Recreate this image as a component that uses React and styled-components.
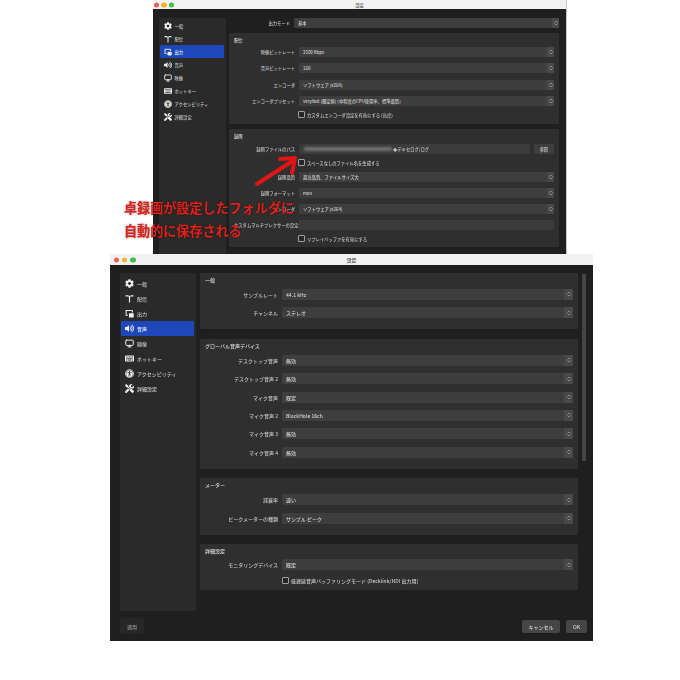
import React from "react";
import styled, { createGlobalStyle } from "styled-components";
import { ChevronsUpDown, Monitor } from "lucide-react";
import { FaCog, FaVolumeUp, FaKeyboard, FaUniversalAccess, FaTools } from "react-icons/fa";

const AntennaIcon = () => (
  <svg width="100%" height="100%" viewBox="0 0 16 16" fill="currentColor">
    <path d="M1 2h5.5v2.5H1zM9.500 2H15v2.500H9.500z" />
    <path d="M6.500 3.500h3V6H9v9H7V6h-.5z" />
  </svg>
);

const OutputIcon = () => (
  <svg width="100%" height="100%" viewBox="0 0 16 16" fill="none" stroke="currentColor" strokeWidth="1.800">
    <path d="M5 11H2V2.500h11V6" />
    <path d="M7 12.500h6" />
    <path d="M8 8.500h6.500v5.500H8z" fill="currentColor" />
  </svg>
);

const NAV = [
  { label: "一般", icon: <FaCog /> },
  { label: "配信", icon: <AntennaIcon /> },
  { label: "出力", icon: <OutputIcon /> },
  { label: "音声", icon: <FaVolumeUp /> },
  { label: "映像", icon: <Monitor strokeWidth={2.6} /> },
  { label: "ホットキー", icon: <FaKeyboard /> },
  { label: "アクセシビリティ", icon: <FaUniversalAccess /> },
  { label: "詳細設定", icon: <FaTools /> },
];

const GlobalStyle = createGlobalStyle`
  html, body {
    margin: 0;
    padding: 0;
    background: #fff;
  }
  body {
    font-family: "Noto Sans CJK JP", "Liberation Sans", sans-serif;
  }
`;

const Stage = styled.div`
  position: relative;
  width: 680px;
  height: 680px;
  overflow: hidden;
  display: flex;
  flex-direction: column;
  align-items: flex-start;
`;

const Window = styled.div`
  --font: ${(p) => (p.$compact ? "4.3px" : "5px")};
  --row-h: ${(p) => (p.$compact ? "10px" : "11px")};
  --row-gap: ${(p) => (p.$compact ? "6.2px" : "7.4px")};
  --label-w: ${(p) => (p.$compact ? "61px" : "73px")};
  --item-h: ${(p) => (p.$compact ? "13px" : "15px")};
  --icon: ${(p) => (p.$compact ? "8px" : "9px")};
  --nav-pad: 4px;
  --nav-gap: ${(p) => (p.$compact ? "2.500px" : "3px")};
  --spin: ${(p) => (p.$compact ? "7px" : "9px")};
  margin-left: ${(p) => p.$left}px;
  width: ${(p) => p.$width}px;
  height: ${(p) => p.$height}px;
  display: flex;
  flex-direction: column;
  flex: none;
  overflow: hidden;
  background: #1f1f1f;
  color: #d2d2d2;
  font-size: var(--font);
  font-weight: 500;
  box-shadow: ${(p) => (p.$compact ? "1px 0 0 #c8c8c8" : "none")};
  filter: blur(0.4px);
`;

const TitleBar = styled.div`
  position: relative;
  flex: none;
  height: ${(p) => p.$height}px;
  display: flex;
  align-items: center;
  justify-content: center;
  background: #f1f1f1;
  color: #444;
`;

const Lights = styled.div`
  position: absolute;
  left: ${(p) => (p.$compact ? "0.500px" : "3.700px")};
  top: 50%;
  transform: translateY(-50%);
  display: flex;
  gap: ${(p) => (p.$compact ? "2.700px" : "3.200px")};
`;

const Light = styled.span`
  width: 5.200px;
  height: 5.200px;
  border-radius: 50%;
  background: ${(p) => p.$color};
`;

const Body = styled.div`
  flex: 1;
  min-height: 0;
  display: flex;
  flex-direction: column;
`;

const Columns = styled.div`
  flex: 1;
  min-height: 0;
  display: flex;
  align-items: stretch;
  padding: ${(p) => p.$top}px 7px 0 ${(p) => p.$left}px;
  gap: ${(p) => p.$gap}px;
`;

const Sidebar = styled.div`
  flex: none;
  width: ${(p) => p.$width}px;
  padding: ${(p) => p.$top}px 2px 0 1px;
  background: #2a2a2a;
  box-sizing: border-box;
`;

const NavItem = styled.div`
  height: var(--item-h);
  display: flex;
  align-items: center;
  gap: var(--nav-gap);
  padding-left: var(--nav-pad);
  border-radius: 1px;
  background: ${(p) => (p.$active ? "#1e48b9" : "transparent")};
  color: ${(p) => (p.$active ? "#e6ecfa" : "#c6c6c6")};
`;

const NavIcon = styled.span`
  flex: none;
  width: var(--icon);
  height: var(--icon);
  display: flex;
  align-items: center;
  justify-content: center;
  color: #f0f0f0;

  svg {
    width: var(--icon);
    height: var(--icon);
  }
`;

const Main = styled.div`
  flex: 1;
  min-width: 0;
  display: flex;
  flex-direction: column;
  gap: ${(p) => p.$gap}px;
`;

const Section = styled.div`
  flex: none;
  padding: 3px 5px ${(p) => p.$bottom}px 5px;
  background: #2f2f2f;
  border-radius: 1px;
  display: flex;
  flex-direction: column;
  gap: var(--row-gap);
`;

const SectionTitle = styled.div`
  height: 8px;
  line-height: 8px;
  margin-bottom: ${(p) => p.$space}px;
  color: #dcdcdc;
`;

const Row = styled.div`
  display: flex;
  align-items: center;
  gap: 4px;
  height: var(--row-h);
`;

const Label = styled.div`
  flex: none;
  width: var(--label-w);
  text-align: right;
  white-space: nowrap;
  color: #c4c4c4;
`;

const Select = styled.div`
  flex: 1;
  min-width: 0;
  height: 100%;
  display: flex;
  align-items: center;
  justify-content: space-between;
  background: #3e3e3e;
  border-radius: 1px;
  overflow: hidden;
`;

const SelectText = styled.span`
  padding-left: 4px;
  white-space: nowrap;
`;

const Spinner = styled.span`
  flex: none;
  width: var(--spin);
  height: 100%;
  display: flex;
  align-items: center;
  justify-content: center;
  background: #494949;
  color: #c8c8c8;
`;

const Field = styled.div`
  flex: 1;
  min-width: 0;
  height: 100%;
  display: flex;
  align-items: center;
  padding-left: 5px;
  background: #3b3b3b;
  border-radius: 1px;
  color: #c4c4c4;
  white-space: nowrap;
`;

const BlurredPath = styled.span`
  width: 88px;
  height: 4px;
  margin-right: 1px;
  background: #6f6f6f;
  filter: blur(1px);
`;

const SideButton = styled.div`
  flex: none;
  width: 20px;
  height: 100%;
  display: flex;
  align-items: center;
  justify-content: center;
  background: #3e3e3e;
  border-radius: 1px;
`;

const CheckRow = styled.div`
  display: flex;
  align-items: center;
  gap: 2px;
  height: ${(p) => p.$height ?? 7}px;
  padding-left: ${(p) => p.$indent}px;
  white-space: nowrap;
  color: #c8c8c8;
`;

const Box = styled.span`
  flex: none;
  width: 5px;
  height: 5px;
  border: 0.5px solid #a0a0a0;
  border-radius: 1px;
  background: #262626;
`;

const Scrollbar = styled.div`
  flex: none;
  width: 4px;
  height: 187px;
  margin: 1px 0 0 0;
  background: #454545;
  border-radius: 1px;
`;

const Footer = styled.div`
  flex: none;
  height: 30px;
  display: flex;
  align-items: center;
  gap: 6px;
  padding: 0 6px 0 10px;
`;

const FootButton = styled.div`
  width: ${(p) => p.$width}px;
  height: ${(p) => (p.$dim ? 16 : 13)}px;
  display: flex;
  align-items: center;
  justify-content: center;
  border-radius: 2px;
  background: ${(p) => (p.$dim ? "#272727" : "#464646")};
  color: ${(p) => (p.$dim ? "#8c8c8c" : "#d8d8d8")};
  margin-right: ${(p) => (p.$push ? "auto" : "0")};
`;

const Note = styled.div`
  position: absolute;
  left: 124px;
  top: 199px;
  display: flex;
  flex-direction: column;
  gap: 6px;
  color: #e0201a;
  font-size: 13.100px;
  line-height: 17px;
  font-weight: 700;
  white-space: nowrap;
  text-shadow: 0 0 2px rgba(40, 0, 0, 0.6);
  filter: blur(0.3px);
`;

const Arrow = styled.svg`
  position: absolute;
  left: 250px;
  top: 150px;
  width: 55px;
  height: 42px;
`;

const Nav = ({ active, top, width }) => (
  <Sidebar $top={top} $width={width}>
    {NAV.map((n) => (
      <NavItem key={n.label} $active={n.label === active}>
        <NavIcon>{n.icon}</NavIcon>
        {n.label}
      </NavItem>
    ))}
  </Sidebar>
);

const Choice = ({ label, value }) => (
  <Row>
    <Label>{label}</Label>
    <Select>
      <SelectText>{value}</SelectText>
      <Spinner>
        <ChevronsUpDown size={6} strokeWidth={2} />
      </Spinner>
    </Select>
  </Row>
);

const Traffic = ({ compact }) => (
  <Lights $compact={compact}>
    <Light $color="#ee5f56" />
    <Light $color="#f3b431" />
    <Light $color="#3fc04a" />
  </Lights>
);

const App = () => (
  <Stage>
    <GlobalStyle />

    <Window $compact $left={153} $width={413} $height={254}>
      <TitleBar $height={9}>
        <Traffic compact />
        設定
      </TitleBar>
      <Body>
        <Columns $top={9} $left={6} $gap={3}>
          <Nav active="出力" top={1} width={67} />
          <Main $gap={5}>
            <Choice label="出力モード" value="基本" />
            <Section $bottom={6}>
              <SectionTitle $space={-3}>配信</SectionTitle>
              <Choice label="映像ビットレート" value="2500 Kbps" />
              <Choice label="音声ビットレート" value="160" />
              <Choice label="エンコーダ" value="ソフトウェア (x264)" />
              <Choice label="エンコーダプリセット" value="veryfast (既定値) (中程度のCPU使用率、標準品質)" />
              <CheckRow $indent={64} $height={6}>
                <Box />
                カスタムエンコーダ設定を有効にする (高度)
              </CheckRow>
            </Section>
            <Section $bottom={6}>
              <SectionTitle $space={-2}>録画</SectionTitle>
              <Row>
                <Label>録画ファイルのパス</Label>
                <Field>
                  <BlurredPath />
                  ◆デキセログ/ログ
                </Field>
                <SideButton>参照</SideButton>
              </Row>
              <CheckRow $indent={64} $height={5}>
                <Box />
                スペースなしのファイル名を生成する
              </CheckRow>
              <Choice label="録画品質" value="超高品質、ファイルサイズ大" />
              <Choice label="録画フォーマット" value="mov" />
              <Choice label="エンコーダ" value="ソフトウェア (x264)" />
              <Row>
                <Label>カスタムマルチプレクサーの設定</Label>
                <Field />
              </Row>
              <CheckRow $indent={64} $height={5}>
                <Box />
                リプレイバッファを有効にする
              </CheckRow>
            </Section>
          </Main>
        </Columns>
      </Body>
    </Window>

    <Window $left={110} $width={483} $height={387}>
      <TitleBar $height={11}>
        <Traffic />
        設定
      </TitleBar>
      <Body>
        <Columns $top={8} $left={10} $gap={4}>
          <Nav active="音声" top={3} width={76} />
          <Main $gap={9.600}>
            <Section $bottom={11}>
              <SectionTitle $space={-2.500}>一般</SectionTitle>
              <Choice label="サンプルレート" value="44.1 kHz" />
              <Choice label="チャンネル" value="ステレオ" />
            </Section>
            <Section $bottom={11}>
              <SectionTitle $space={-2.500}>グローバル音声デバイス</SectionTitle>
              <Choice label="デスクトップ音声" value="無効" />
              <Choice label="デスクトップ音声 2" value="無効" />
              <Choice label="マイク音声" value="既定" />
              <Choice label="マイク音声 2" value="BlackHole 16ch" />
              <Choice label="マイク音声 3" value="無効" />
              <Choice label="マイク音声 4" value="無効" />
            </Section>
            <Section $bottom={11}>
              <SectionTitle $space={-2.500}>メーター</SectionTitle>
              <Choice label="減衰率" value="速い" />
              <Choice label="ピークメーターの種類" value="サンプル ピーク" />
            </Section>
            <Section $bottom={6}>
              <SectionTitle $space={-3.500}>詳細設定</SectionTitle>
              <Choice label="モニタリングデバイス" value="既定" />
              <CheckRow $indent={77}>
                <Box />
                低遅延音声バッファリングモード (Decklink/NDI 出力用)
              </CheckRow>
            </Section>
          </Main>
          <Scrollbar />
        </Columns>
        <Footer>
          <FootButton $dim $push $width={24}>適用</FootButton>
          <FootButton $width={38}>キャンセル</FootButton>
          <FootButton $width={21}>OK</FootButton>
        </Footer>
      </Body>
    </Window>

    <Arrow viewBox="0 0 55 42">
      <path
        d="M7 34 L44 10 M30 9 L45 8 L42 23"
        fill="none"
        stroke="#e01515"
        strokeWidth="4"
        strokeLinecap="round"
        strokeLinejoin="round"
      />
    </Arrow>
    <Note>
      <span>卓録画が設定したフォルダに</span>
      <span>自動的に保存される</span>
    </Note>
  </Stage>
);

export default App;
